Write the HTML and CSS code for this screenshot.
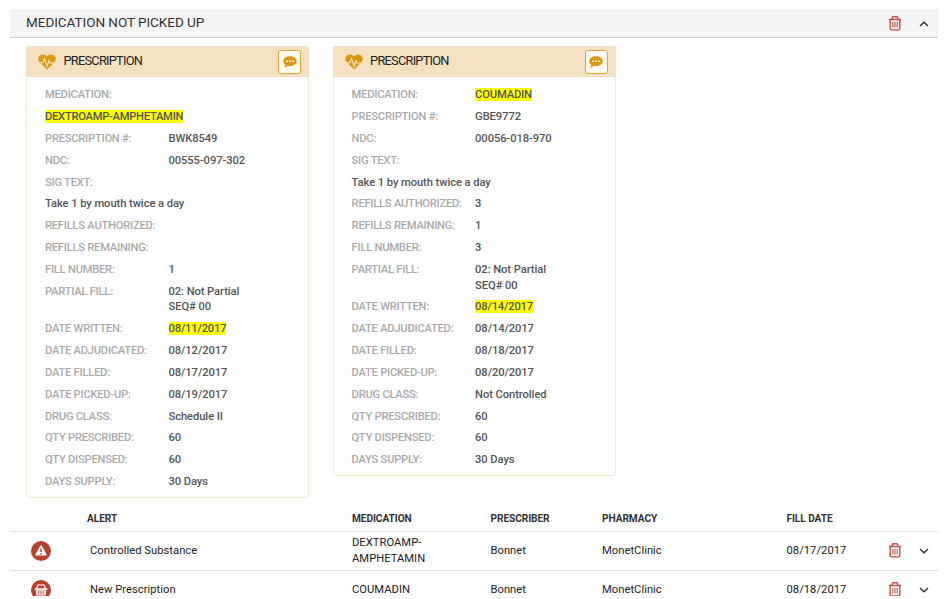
FILE: index.html
```html
<!DOCTYPE html>
<html lang="en">
<head>
<meta charset="utf-8">
<title>Medication Not Picked Up</title>
<link rel="stylesheet" href="styles.css">
</head>
<body>
<svg class="defs" aria-hidden="true">
  <symbol id="trash" viewBox="0 0 14 15">
    <path d="M1 3.5h12M4.3 3.2V1.6q0-.8.8-.8h3.8q.8 0 .8.8v1.6M2.2 3.7v8.8q0 1.4 1.3 1.4h7q1.3 0 1.3-1.4V3.7" fill="none" stroke="currentColor" stroke-width="1.4"/>
    <path d="M4.8 6v5.600M7 6v5.600M9.200 6v5.600" fill="none" stroke="currentColor" stroke-width="1.100"/>
  </symbol>
  <symbol id="heart" viewBox="0 0 18 16">
    <path d="M9 15.5 2.5 9.2C.7 7.4 0 5.900 .4 3.900 1.200 .3 6-.8 9 2.500c3-3.300 7.800-2.200 8.600 1.400.4 2-.3 3.500-2.100 5.300z" fill="currentColor"/>
    <path d="M.6 8.600h4.200l1.700-4.200 2.500 7.800 2-5.500 1.100 2.300h5.300" fill="none" stroke="#f5e1c2" stroke-width="1.200"/>
  </symbol>
  <symbol id="comment" viewBox="0 0 14 12">
    <path d="M7 .3c3.800 0 6.700 2.100 6.700 4.900S10.800 10 7 10c-.8 0-1.500-.1-2.200-.3C3.700 10.800 2.300 11.500.8 11.600c.9-.9 1.300-1.700 1.400-2.900C1 7.800.3 6.600.3 5.200.3 2.400 3.200.3 7 .3z" fill="currentColor"/>
    <path d="M3.200 4.400h1.700v1.700H3.200zM6.200 4.400h1.700v1.700H6.200zM9.200 4.400h1.700v1.700H9.200z" fill="#fffaf0"/>
  </symbol>
  <symbol id="chevron" viewBox="0 0 10 6">
    <path d="M1 .9 5 4.700 9 .9" fill="none" stroke="currentColor" stroke-width="1.400"/>
  </symbol>
</svg>
<main class="page">
  <header class="bar">
    <h1>MEDICATION NOT PICKED UP</h1>
    <svg class="trash"><use href="#trash"/></svg>
    <svg class="chevron up"><use href="#chevron"/></svg>
  </header>

  <section class="cards">
    <article class="card">
      <header class="card-head">
        <svg class="heart"><use href="#heart"/></svg>
        <h2>PRESCRIPTION</h2>
        <span class="chat"><svg><use href="#comment"/></svg></span>
      </header>
      <div class="rows">
        <div class="row"><b>MEDICATION:</b></div>
        <div class="row"><span><mark>DEXTROAMP-AMPHETAMIN</mark></span></div>
        <div class="row"><b>PRESCRIPTION #:</b><span>BWK8549</span></div>
        <div class="row"><b>NDC:</b><span>00555-097-302</span></div>
        <div class="row"><b>SIG TEXT:</b></div>
        <div class="row"><span>Take 1 by mouth twice a day</span></div>
        <div class="row"><b>REFILLS AUTHORIZED:</b></div>
        <div class="row"><b>REFILLS REMAINING:</b></div>
        <div class="row"><b>FILL NUMBER:</b><span>1</span></div>
        <div class="row"><b>PARTIAL FILL:</b><span>02: Not Partial<br>SEQ# 00</span></div>
        <div class="row"><b>DATE WRITTEN:</b><span><mark>08/11/2017</mark></span></div>
        <div class="row"><b>DATE ADJUDICATED:</b><span>08/12/2017</span></div>
        <div class="row"><b>DATE FILLED:</b><span>08/17/2017</span></div>
        <div class="row"><b>DATE PICKED-UP:</b><span>08/19/2017</span></div>
        <div class="row"><b>DRUG CLASS:</b><span>Schedule II</span></div>
        <div class="row"><b>QTY PRESCRIBED:</b><span>60</span></div>
        <div class="row"><b>QTY DISPENSED:</b><span>60</span></div>
        <div class="row"><b>DAYS SUPPLY:</b><span>30 Days</span></div>
      </div>
    </article>

    <article class="card">
      <header class="card-head">
        <svg class="heart"><use href="#heart"/></svg>
        <h2>PRESCRIPTION</h2>
        <span class="chat"><svg><use href="#comment"/></svg></span>
      </header>
      <div class="rows">
        <div class="row"><b>MEDICATION:</b><span><mark>COUMADIN</mark></span></div>
        <div class="row"><b>PRESCRIPTION #:</b><span>GBE9772</span></div>
        <div class="row"><b>NDC:</b><span>00056-018-970</span></div>
        <div class="row"><b>SIG TEXT:</b></div>
        <div class="row"><span>Take 1 by mouth twice a day</span></div>
        <div class="row"><b>REFILLS AUTHORIZED:</b><span>3</span></div>
        <div class="row"><b>REFILLS REMAINING:</b><span>1</span></div>
        <div class="row"><b>FILL NUMBER:</b><span>3</span></div>
        <div class="row"><b>PARTIAL FILL:</b><span>02: Not Partial<br>SEQ# 00</span></div>
        <div class="row"><b>DATE WRITTEN:</b><span><mark>08/14/2017</mark></span></div>
        <div class="row"><b>DATE ADJUDICATED:</b><span>08/14/2017</span></div>
        <div class="row"><b>DATE FILLED:</b><span>08/18/2017</span></div>
        <div class="row"><b>DATE PICKED-UP:</b><span>08/20/2017</span></div>
        <div class="row"><b>DRUG CLASS:</b><span>Not Controlled</span></div>
        <div class="row"><b>QTY PRESCRIBED:</b><span>60</span></div>
        <div class="row"><b>QTY DISPENSED:</b><span>60</span></div>
        <div class="row"><b>DAYS SUPPLY:</b><span>30 Days</span></div>
      </div>
    </article>
  </section>

  <section class="alerts">
    <div class="line head">
      <span></span><span>ALERT</span><span>MEDICATION</span><span>PRESCRIBER</span><span>PHARMACY</span><span>FILL DATE</span>
    </div>
    <div class="line">
      <svg class="badge" viewBox="0 0 20 20">
        <circle cx="10" cy="10" r="10" fill="#b8402d"/>
        <path d="M10 4.800 15 13.800H5z" fill="#fff" stroke="#fff" stroke-width="1.300" stroke-linejoin="round"/>
        <path d="M10 7.500v3.400M10 11.900v1.500" stroke="#b8402d" stroke-width="1.500"/>
      </svg>
      <span class="name">Controlled Substance</span><span>DEXTROAMP-<br>AMPHETAMIN</span><span>Bonnet</span><span>MonetClinic</span><span>08/17/2017</span>
      <svg class="trash"><use href="#trash"/></svg>
      <svg class="chevron"><use href="#chevron"/></svg>
    </div>
    <div class="line">
      <svg class="badge" viewBox="0 0 20 20">
        <circle cx="10" cy="10" r="10" fill="#b8402d"/>
        <path d="M5.500 8.500 7 5h6l1.500 3.500" fill="none" stroke="#fff" stroke-width="1.200"/>
        <path d="M3.600 8.200h12.800v1.500H3.600zM4.600 10.200h10.800l-.9 5.300h-9z" fill="#fff"/>
        <path d="M7.300 11v3.600M9.100 11v3.600M10.900 11v3.600M12.700 11v3.600" stroke="#b8402d" stroke-width=".8"/>
      </svg>
      <span class="name">New Prescription</span><span>COUMADIN</span><span>Bonnet</span><span>MonetClinic</span><span>08/18/2017</span>
      <svg class="trash"><use href="#trash"/></svg>
      <svg class="chevron"><use href="#chevron"/></svg>
    </div>
  </section>
</main>
</body>
</html>
```

FILE: styles.css
```css
* { box-sizing: border-box; }
html, body { height: 100%; overflow: hidden; }
body {
  margin: 0;
  background: #fff;
  color: #444;
  font: 500 11px/15.6px Roboto, sans-serif;
}
.defs { position: absolute; width: 0; height: 0; }
.page { height: 596px; padding: 9px 6px 0 10px; overflow: hidden; }
h1, h2 { margin: 0; font-weight: 400; }
svg { display: block; }

.bar {
  display: flex;
  align-items: center;
  height: 29px;
  padding: 0 9px 0 16px;
  background: #f4f4f4;
  border-bottom: 1px solid #ccc;
}
.bar h1 { flex: 1; font-size: 13.5px; letter-spacing: -.04px; color: #333; }
.trash { width: 14px; height: 15px; color: #c4503f; }
.bar .trash { margin-right: 17px; }
.chevron { width: 10px; height: 6px; color: #333; }
.bar .chevron { margin-top: 2px; }
.up { transform: rotate(180deg); }

.cards {
  display: flex;
  align-items: flex-start;
  gap: 23.300px;
  height: 461px;
  padding: 8px 0 0 16px;
}
.card {
  width: 283.300px;
  border: 1px solid #f8e8d0;
  border-radius: 3px;
}
.card-head {
  display: flex;
  align-items: center;
  height: 31px;
  margin: -1px -1px 0;
  padding: 0 8px 0 12px;
  background: #f5e1c2;
  border-radius: 3px 3px 0 0;
}
.heart { width: 18px; height: 16px; color: #dd9813; }
.card-head h2 {
  flex: 1;
  padding: 0 0 1px 7.500px;
  font-size: 12.800px;
  letter-spacing: -.75px;
  color: #222;
}
.chat {
  display: grid;
  place-items: center;
  width: 23px;
  height: 24px;
  margin-top: 1px;
  color: #dd9813;
  background: #fffaf2;
  border: 1px solid #e0a437;
  border-radius: 3px;
}
.chat svg { width: 14px; height: 12px; }
.rows {
  display: flex;
  flex-direction: column;
  gap: 6.250px;
  padding: 10.200px 0 7px 18px;
}
.row {
  display: flex;
  min-height: 15.600px;
  font-size: 11.200px;
  letter-spacing: -.08px;
  color: #555;
}
.row b { flex: 0 0 123.500px; font-weight: 500; letter-spacing: -.25px; color: #aaa; }
mark { background: #ff0; color: #555; }
.row mark { letter-spacing: -.17px; }
.row:nth-child(2) > span:only-child mark { letter-spacing: -.27px; }

.line {
  display: grid;
  grid-template-columns: 77px 265px 138.500px 111.500px 184.500px 101.500px 31px 1fr;
  align-items: center;
  height: 39px;
  border-bottom: 1px solid #e2e2e2;
  font-size: 11.200px;
  font-weight: 400;
  letter-spacing: .03px;
  color: #222;
}
.line .trash { margin-top: -1px; }
.head {
  height: 33px;
  padding-top: 7px;
  font-size: 10.200px;
  font-weight: 700;
  letter-spacing: -.1px;
  color: #333;
}
.badge { width: 20px; height: 20px; margin-left: 21px; }
.name { padding-left: 3px; }
```
